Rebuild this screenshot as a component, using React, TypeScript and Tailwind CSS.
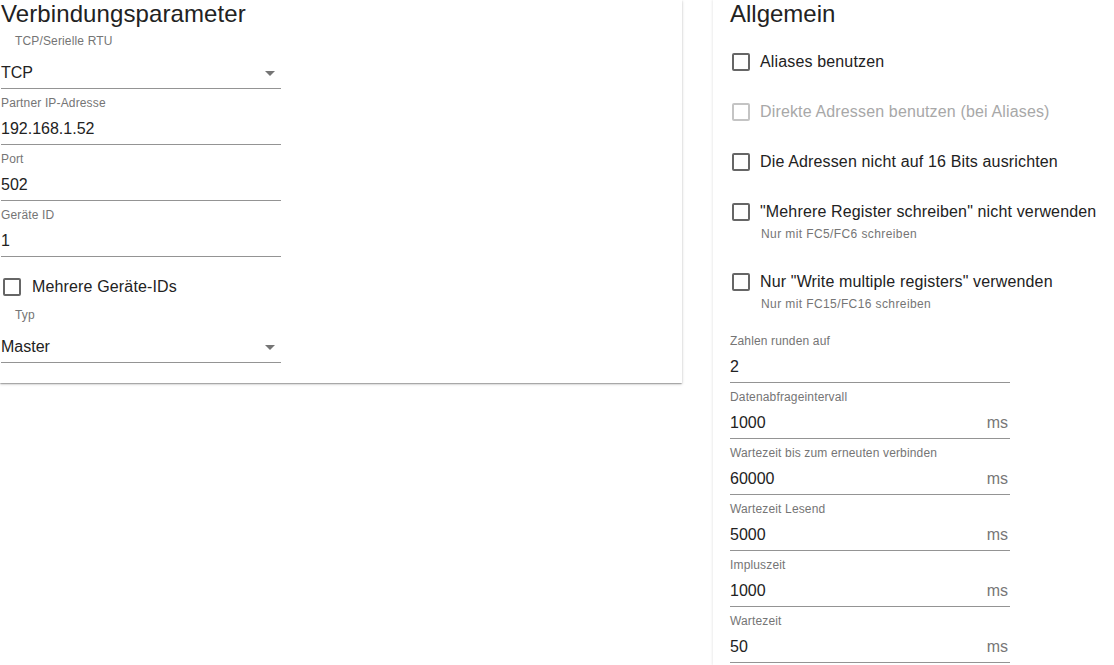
import React from "react";

const font = { fontFamily: '"Liberation Sans", Arial, sans-serif' };

const Arrow = () => (
  <svg width="24" height="24" viewBox="0 0 24 24" className="fill-[#757575]">
    <path d="M7 10l5 5 5-5z" />
  </svg>
);

const Box = ({ disabled }: { disabled?: boolean }) => (
  <span
    className={
      "block h-[18px] w-[18px] rounded-[2px] border-2 " +
      (disabled ? "border-[#c4c4c4]" : "border-[#666]")
    }
  />
);

const TextField = ({ label, value, unit }: { label: string; value: string; unit?: string }) => (
  <div className="w-[280px] border-b border-[#949494] pt-[6px] pb-[5px]">
    <div className="h-4 text-[12px] leading-4 tracking-[0.15px] text-[#757575]">{label}</div>
    <div className="mt-[8px] flex h-5 items-center justify-between text-[16px] leading-5 text-[#222]">
      <span>{value}</span>
      {unit && <span className="pr-[2px] text-[#777]">{unit}</span>}
    </div>
  </div>
);

const SelectField = ({ label, value, gap }: { label: string; value: string; gap: string }) => (
  <div className="w-[280px]">
    <div className="h-4 pl-[14px] text-[12px] leading-4 tracking-[0.15px] text-[#757575]">{label}</div>
    <div className={"flex h-5 items-center justify-between border-b border-[#949494] pb-[5px] box-content text-[16px] leading-5 text-[#222] " + gap}>
      <span>{value}</span>
      <span className="-mr-[1px] -mt-[1px] flex h-5 items-center">
        <Arrow />
      </span>
    </div>
  </div>
);

const CheckRow = ({ label, helper, disabled }: { label: string; helper?: string; disabled?: boolean }) => (
  <div className="pb-[30px]">
    <div className="flex h-5 items-center">
      <span className="ml-[2px] mr-[10px]">
        <Box disabled={disabled} />
      </span>
      <span className={"text-[16px] leading-5 tracking-[0.15px] " + (disabled ? "text-[#a8a8a8]" : "text-[#222]")}>{label}</span>
    </div>
    {helper && (
      <div className="mt-[4px] h-4 pl-[31px] text-[12px] leading-4 tracking-[0.4px] text-[#757575]">{helper}</div>
    )}
  </div>
);

export default function App() {
  return (
    <div className="flex h-[665px] w-[1114px] overflow-hidden bg-white" style={font}>
      {/* Verbindungsparameter */}
      <section className="w-[682px] self-start bg-white pl-[1px] pb-[20px] shadow-[0_1px_3px_rgba(0,0,0,0.2),0_1px_1px_rgba(0,0,0,0.14),0_2px_1px_-1px_rgba(0,0,0,0.12)]">
        <h2 className="h-7 text-[24px] leading-7 tracking-[0.1px] text-[#222]">Verbindungsparameter</h2>
        <div className="mt-[5px]">
          <SelectField label="TCP/Serielle RTU" value="TCP" gap="mt-[14px]" />
        </div>
        <TextField label="Partner IP-Adresse" value="192.168.1.52" />
        <TextField label="Port" value="502" />
        <TextField label="Geräte ID" value="1" />
        <div className="mt-[20px] flex h-5 items-center">
          <span className="ml-[2px] mr-[11px]">
            <Box />
          </span>
          <span className="text-[16px] leading-5 tracking-[0.15px] text-[#222]">Mehrere Geräte-IDs</span>
        </div>
        <div className="mt-[10px]">
          <SelectField label="Typ" value="Master" gap="mt-[14px]" />
        </div>
      </section>

      {/* Allgemein */}
      <section className="ml-[31px] flex-1 bg-white pl-[17px] shadow-[-1px_0_2px_rgba(0,0,0,0.08)]">
        <h2 className="h-7 text-[24px] leading-7 text-[#222]">Allgemein</h2>
        <div className="mt-[24px]">
          <CheckRow label="Aliases benutzen" />
          <CheckRow label="Direkte Adressen benutzen (bei Aliases)" disabled />
          <CheckRow label="Die Adressen nicht auf 16 Bits ausrichten" />
          <CheckRow label={'"Mehrere Register schreiben" nicht verwenden'} helper="Nur mit FC5/FC6 schreiben" />
          <div className="-mb-[15px]">
            <CheckRow label={'Nur "Write multiple registers" verwenden'} helper="Nur mit FC15/FC16 schreiben" />
          </div>
        </div>
        <TextField label="Zahlen runden auf" value="2" />
        <TextField label="Datenabfrageintervall" value="1000" unit="ms" />
        <TextField label="Wartezeit bis zum erneuten verbinden" value="60000" unit="ms" />
        <TextField label="Wartezeit Lesend" value="5000" unit="ms" />
        <TextField label="Impluszeit" value="1000" unit="ms" />
        <TextField label="Wartezeit" value="50" unit="ms" />
      </section>
    </div>
  );
}
